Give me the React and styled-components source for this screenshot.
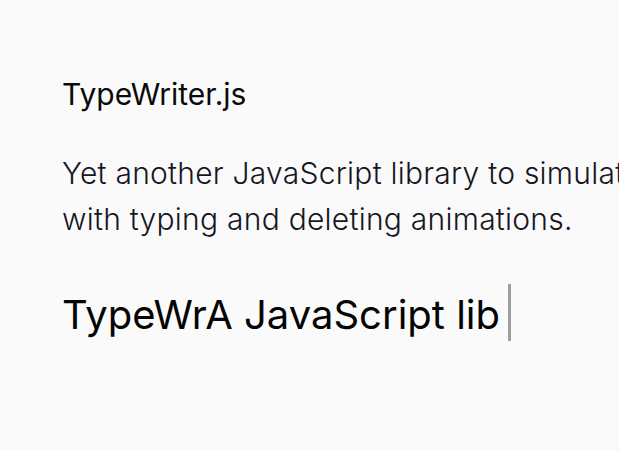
import styled, { createGlobalStyle } from 'styled-components';

const GlobalStyle = createGlobalStyle`
  html, body {
    margin: 0;
    padding: 0;
    background: #fafafa;
  }
  body {
    font-family: Inter, "Noto Sans", sans-serif;
    color: #111;
    overflow: hidden;
  }
`;

const Page = styled.main`
  width: 619px;
  height: 451px;
  box-sizing: border-box;
  padding: 76px 0 0 62px;
  overflow: hidden;
`;

const Title = styled.h1`
  margin: 0;
  font-size: 30px;
  font-weight: 400;
  line-height: 36px;
  color: #0a0a0a;
`;

// wider than the window on purpose: the first line runs off the right edge
const Intro = styled.p`
  margin: 38px 0 0;
  width: 760px;
  font-size: 30px;
  font-weight: 300;
  letter-spacing: 0.25px;
  line-height: 46px;
  color: #16161f;
`;

const Typed = styled.div`
  margin-top: 44px;
  display: flex;
  align-items: flex-start;
  font-size: 40px;
  line-height: 58px;
  color: #050505;
`;

const Cursor = styled.span`
  display: inline-block;
  width: 3px;
  height: 57px;
  margin: -2px 0 0 8px;
  background: #9e9e9e;
`;

export default function App() {
  return (
    <>
      <GlobalStyle />
      <Page>
        <Title>TypeWriter.js</Title>
        <Intro>
          Yet another JavaScript library to simulate typewriters with typing and deleting animations.
        </Intro>
        <Typed>
          <span>TypeWrA JavaScript lib</span>
          <Cursor />
        </Typed>
      </Page>
    </>
  );
}
